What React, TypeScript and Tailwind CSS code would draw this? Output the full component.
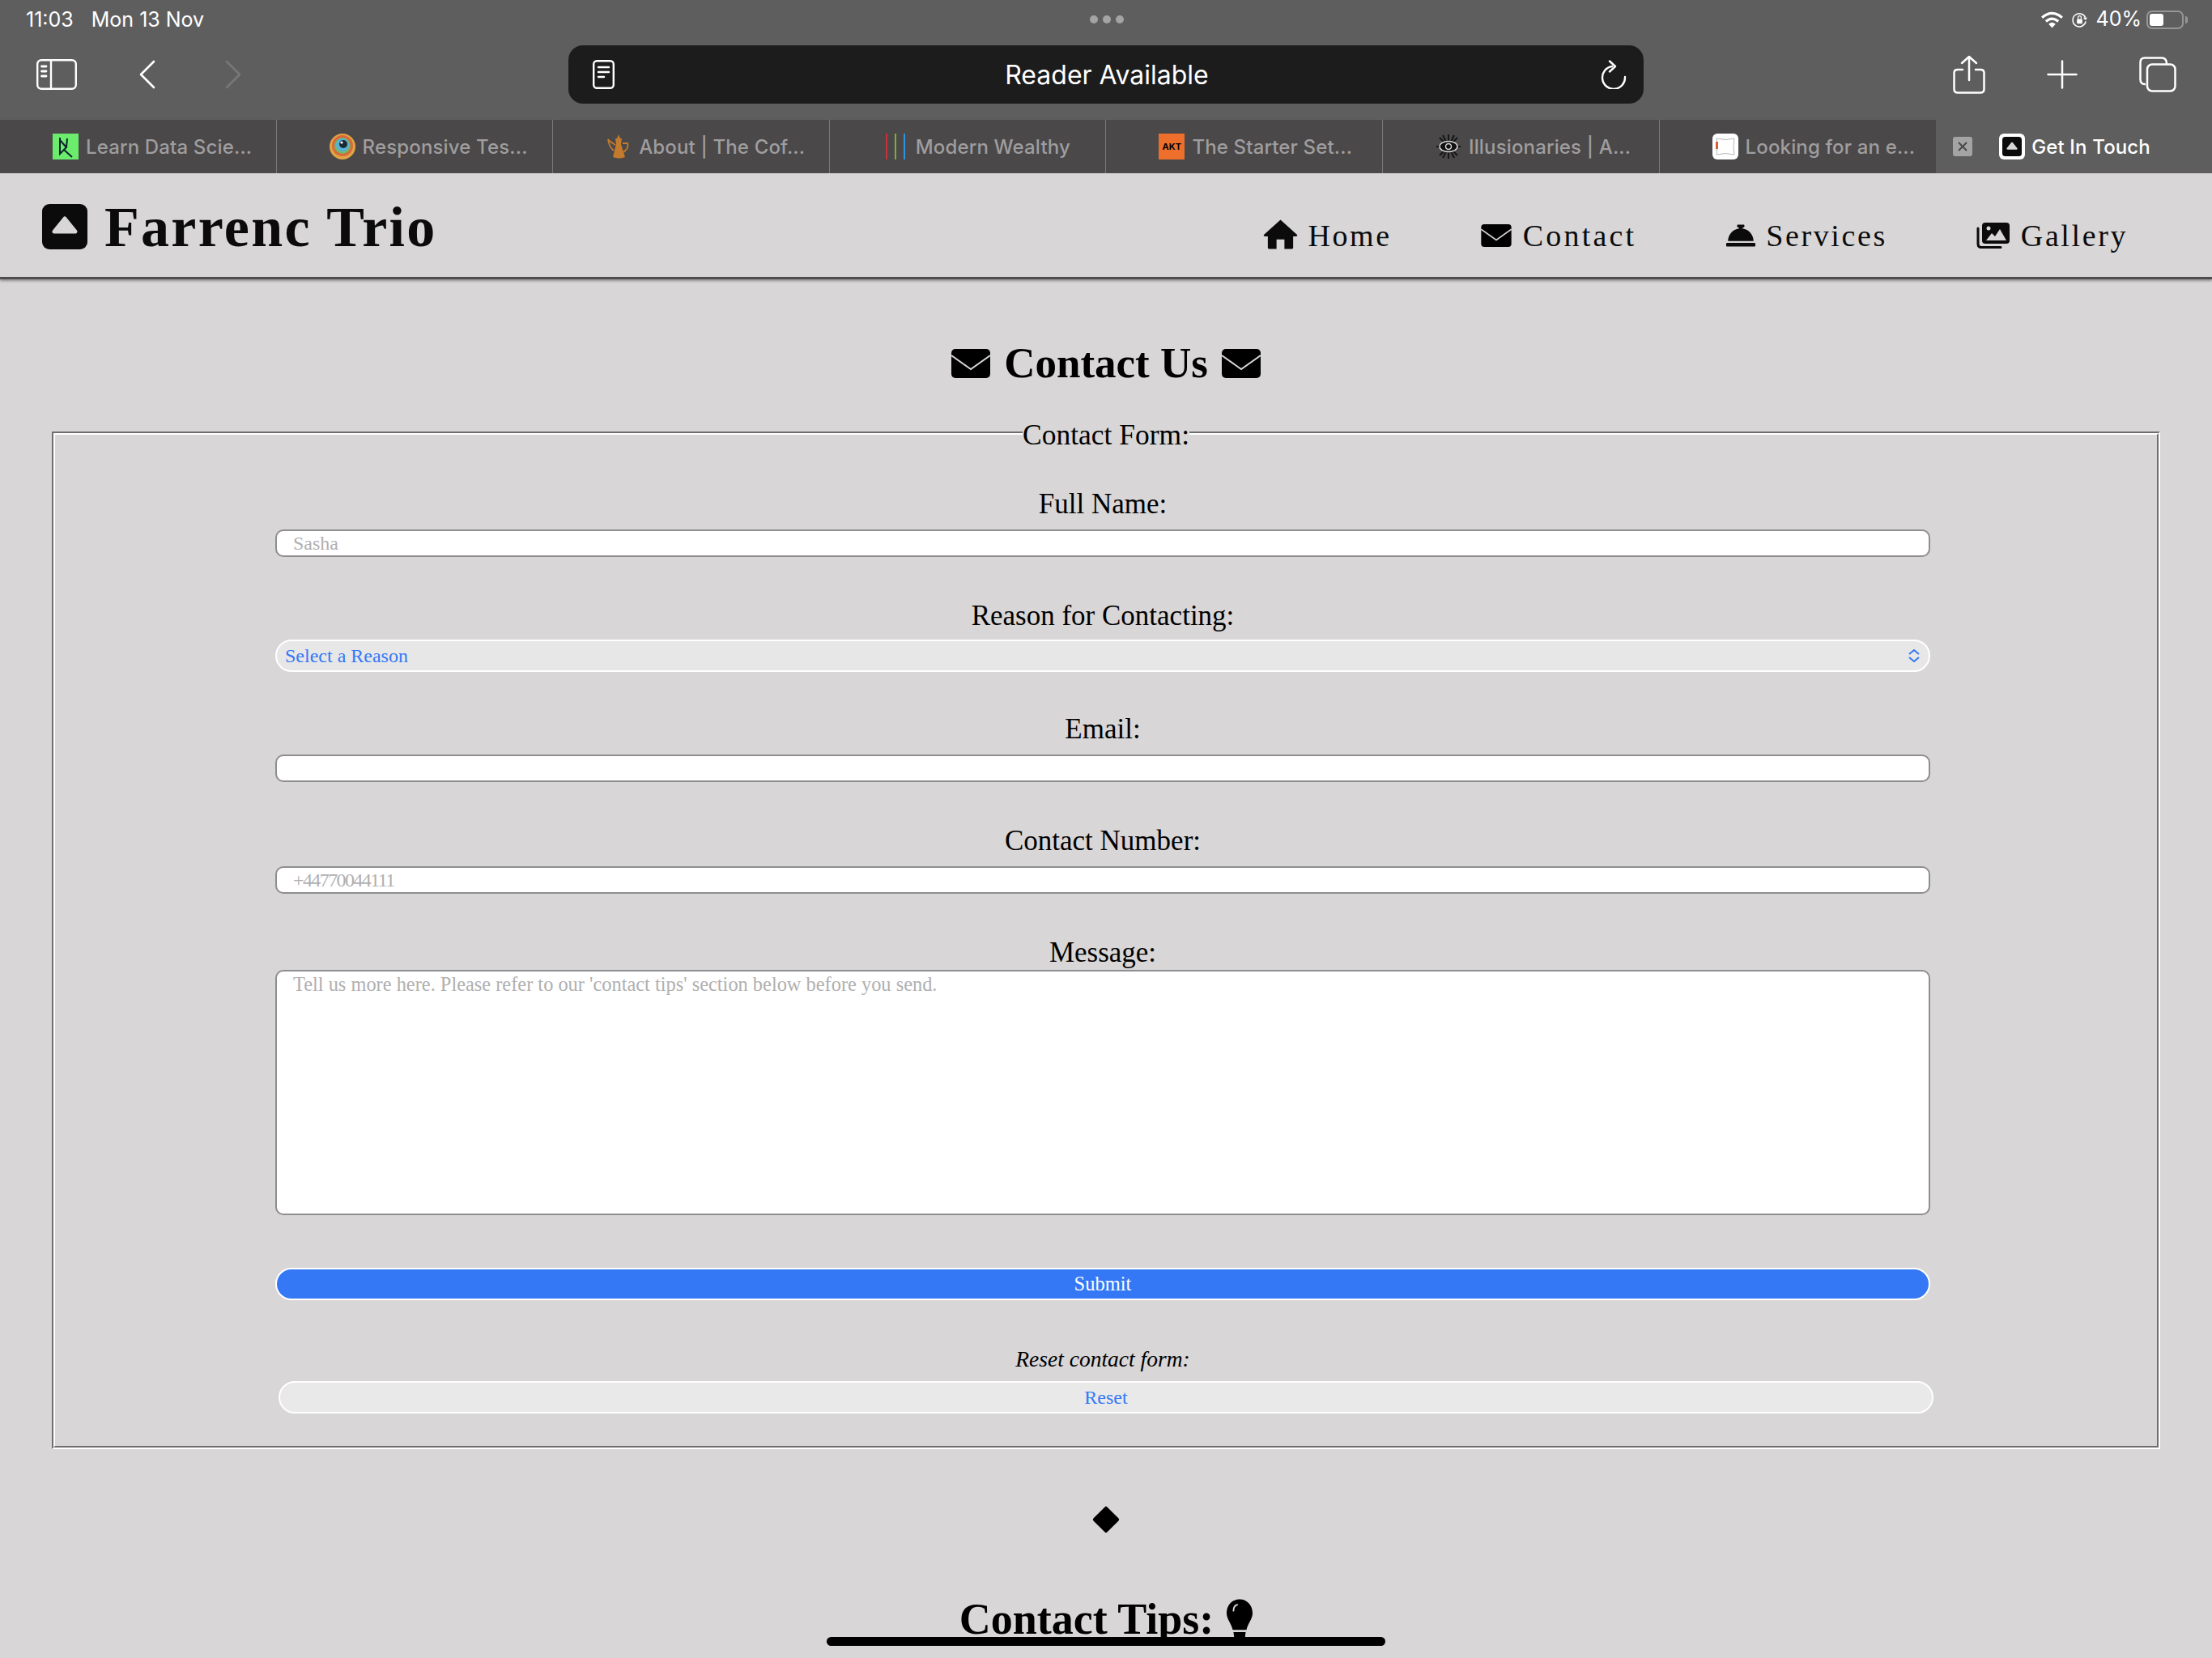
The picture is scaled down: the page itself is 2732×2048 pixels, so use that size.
import { FaConciergeBell } from 'react-icons/fa';

const serif = "font-['Liberation_Serif',serif]";
const ui = "font-['Inter',sans-serif]";

function LogoMark({ className }: { className: string }) {
  return (
    <svg viewBox="0 0 56 56" className={className}>
      <rect width="56" height="56" rx="9" fill="#0b0b0c" />
      <path d="M28 18 L41 34 H15 Z" fill="#d8d6d7" stroke="#d8d6d7" strokeWidth="5" strokeLinejoin="round" />
    </svg>
  );
}

function MailIcon({ className }: { className: string }) {
  return (
    <svg viewBox="0 0 48 36" className={className}>
      <rect width="48" height="36" rx="5" fill="#000" />
      <path d="M0 8 L24 25 L48 8" fill="none" stroke="#d8d6d7" strokeWidth="2" />
    </svg>
  );
}

function HomeIcon({ className }: { className: string }) {
  return (
    <svg viewBox="0 0 44 37" className={className}>
      <path d="M22 0 L43 19 Q44 21 41 21 H38 V35 Q38 37 36 37 H27 V25 H17 V37 H8 Q6 37 6 35 V21 H3 Q0 21 1 19 Z" fill="#0b0b0c" />
    </svg>
  );
}

function GalleryIcon({ className }: { className: string }) {
  return (
    <svg viewBox="0 0 41 32" className={className}>
      <path d="M2 7 V26 Q2 30.5 6 30.5 H30" fill="none" stroke="#0b0b0c" strokeWidth="3" strokeLinecap="round" />
      <rect x="7" y="0" width="34" height="26" rx="4" fill="#0b0b0c" />
      <path d="M12 22 L19 13 L23 17 L29 8 L37 22 Z" fill="#d8d6d7" />
      <circle cx="15" cy="7" r="2.5" fill="#d8d6d7" />
    </svg>
  );
}

function Favicon({ kind }: { kind: string }) {
  if (kind === 'data') {
    return (
      <svg viewBox="0 0 32 32" className="w-8 h-8 shrink-0">
        <rect width="32" height="32" fill="#6cec6c" />
        <path d="M9 5 V25 L17 17 L9 8 M17 17 L18 6 M14 20 L24 29" stroke="#10202a" strokeWidth="2" fill="none" />
      </svg>
    );
  }
  if (kind === 'responsive') {
    return (
      <svg viewBox="0 0 32 32" className="w-8 h-8 shrink-0">
        <circle cx="16" cy="16" r="16" fill="#e2a443" />
        <circle cx="16" cy="15" r="13" fill="#d9683a" />
        <circle cx="16" cy="15" r="10" fill="#74b66a" />
        <circle cx="16" cy="14" r="8" fill="#56b3d8" />
        <circle cx="17" cy="13" r="5" fill="#1d2a33" />
        <circle cx="15" cy="11" r="1.6" fill="#ffffff" />
      </svg>
    );
  }
  if (kind === 'coffee') {
    return (
      <svg viewBox="0 0 32 32" className="w-8 h-8 shrink-0">
        <path d="M16 1 L18 6 H20 L19 13 L24 29 Q16 32 9 29 L13 13 L12 6 H14 Z" fill="#c47a2c" />
        <path d="M12 14 Q5 10 3 7 Q4 16 10 21 M21 12 H27 Q29 18 22 23" stroke="#c47a2c" strokeWidth="1.8" fill="none" />
      </svg>
    );
  }
  if (kind === 'wealth') {
    return (
      <div className="w-8 h-8 shrink-0 flex justify-center gap-[9px]">
        <div className="w-[2px] h-8 bg-[#c8323c]" />
        <div className="w-[2px] h-8 bg-[#7fae36]" />
        <div className="w-[2px] h-8 bg-[#2f93e0]" />
      </div>
    );
  }
  if (kind === 'akt') {
    return (
      <div className={`w-8 h-8 shrink-0 bg-[#ee6f2c] flex items-center justify-center text-[11px] font-bold text-black ${ui}`}>AKT</div>
    );
  }
  if (kind === 'eye') {
    return (
      <svg viewBox="0 0 32 32" className="w-8 h-8 shrink-0">
        <path d="M16 1 V31 M1 16 H31 M5 5 L27 27 M27 5 L5 27 M9 2 L23 30 M23 2 L9 30" stroke="#161616" strokeWidth="2" />
        <ellipse cx="16" cy="16" rx="11" ry="6.5" fill="#111" stroke="#d8d8d8" strokeWidth="1.5" />
        <circle cx="16" cy="16" r="3.5" fill="none" stroke="#d8d8d8" strokeWidth="1.5" />
      </svg>
    );
  }
  return (
    <svg viewBox="0 0 32 32" className="w-8 h-8 shrink-0">
      <rect width="32" height="32" rx="6" fill="#ffffff" />
      <path d="M5 6 Q16 9 27 6 Q25 16 27 26 Q16 23 5 26 Q7 16 5 6 Z" fill="none" stroke="#b8b8b8" strokeWidth="1" />
      <rect x="4" y="10" width="3" height="9" fill="#d9602c" />
    </svg>
  );
}

const tabs = [
  { title: 'Learn Data Scie...', icon: 'data' },
  { title: 'Responsive Tes...', icon: 'responsive' },
  { title: 'About | The Cof...', icon: 'coffee' },
  { title: 'Modern Wealthy', icon: 'wealth' },
  { title: 'The Starter Set...', icon: 'akt' },
  { title: 'Illusionaries | A...', icon: 'eye' },
  { title: 'Looking for an e...', icon: 'pillow' },
];

function StatusBar() {
  return (
    <div className={`flex items-center h-[48px] pl-[32px] pr-[30px] text-white text-[25px] ${ui}`}>
      <div className="flex-1 flex gap-[22px] pt-[1px]">
        <span>11:03</span>
        <span>Mon 13 Nov</span>
      </div>
      <div className="flex gap-[6px]">
        <div className="w-[10px] h-[10px] rounded-full bg-[#a5a4a4]" />
        <div className="w-[10px] h-[10px] rounded-full bg-[#a5a4a4]" />
        <div className="w-[10px] h-[10px] rounded-full bg-[#a5a4a4]" />
      </div>
      <div className="flex-1 flex items-center justify-end">
        <svg viewBox="0 0 30 22" className="w-[29px] h-[21px] mr-[9px]">
          <path d="M2 8 Q15 -3 28 8 M7 13 Q15 6 23 13" stroke="#fff" strokeWidth="3.4" fill="none" />
          <path d="M10.5 16.5 Q15 12.5 19.5 16.5 L15 21.5 Z" fill="#fff" />
        </svg>
        <svg viewBox="0 0 22 22" className="w-[21px] h-[21px] mr-[10px]">
          <path d="M18.5 8 A8.5 8.5 0 1 0 19 13" stroke="#fff" strokeWidth="1.6" fill="none" />
          <path d="M15.5 8 H21 L18.5 11.5 Z" fill="#fff" />
          <rect x="7.5" y="10" width="7" height="6" rx="1" fill="#fff" />
          <path d="M9 10 V8 A2 2 0 0 1 13 8 V10" stroke="#fff" strokeWidth="1.3" fill="none" />
        </svg>
        <span className="mr-[6px]">40%</span>
        <div className="w-[46px] h-[23px] rounded-[7px] border-2 border-[#979696] p-[2px]">
          <div className="w-[17px] h-full rounded-[3px] bg-white" />
        </div>
        <div className="w-[3px] h-[9px] ml-[2px] rounded-r-full bg-[#979696]" />
      </div>
    </div>
  );
}

function Toolbar() {
  return (
    <div className="flex items-center h-[100px] pb-[12px]">
      <div className="w-[702px] flex items-center shrink-0">
        <svg viewBox="0 0 50 38" className="w-[50px] h-[38px] ml-[45px]" fill="none" stroke="#fff" strokeWidth="2.4" strokeLinecap="round">
          <rect x="1.2" y="1.2" width="47.6" height="35.6" rx="5" />
          <path d="M18 1.2 V36.8" />
          <path d="M6.5 9 H12 M6.5 15 H12 M6.5 21 H12" strokeWidth="2.8" />
        </svg>
        <svg viewBox="0 0 20 36" className="w-[20px] h-[36px] ml-[77px]" fill="none" stroke="#fff" strokeWidth="2.6" strokeLinecap="round" strokeLinejoin="round">
          <path d="M18 2 L2 18 L18 34" />
        </svg>
        <svg viewBox="0 0 20 36" className="w-[20px] h-[36px] ml-[86px]" fill="none" stroke="#787777" strokeWidth="2.6" strokeLinecap="round" strokeLinejoin="round">
          <path d="M2 2 L18 18 L2 34" />
        </svg>
      </div>
      <div className="w-[1328px] h-[72px] shrink-0 rounded-[18px] bg-[#1c1c1c] flex items-center pl-[30px] pr-[21px]">
        <svg viewBox="0 0 27 36" className="w-[27px] h-[36px]" fill="none" stroke="#fff" strokeLinecap="round">
          <rect x="1.2" y="1.2" width="24.6" height="33.6" rx="4" strokeWidth="2.4" />
          <path d="M7 9 H20 M7 15 H20 M7 21 H14" strokeWidth="2.4" />
        </svg>
        <span className={`flex-1 text-center text-white text-[32px] pt-[2px] pr-[2px] ${ui}`}>Reader Available</span>
        <svg viewBox="0 0 32 36" className="w-[32px] h-[36px]" fill="none" stroke="#fff" strokeWidth="2.4" strokeLinecap="round" strokeLinejoin="round">
          <path d="M14 8 A14 14 0 1 0 30 21" />
          <path d="M11 1.5 L18 8 L11 14.5" />
        </svg>
      </div>
      <div className="flex items-center">
        <svg viewBox="0 0 40 48" className="w-[40px] h-[48px] ml-[382px]" fill="none" stroke="#fff" strokeWidth="2.5" strokeLinecap="round" strokeLinejoin="round">
          <path d="M20 2 V31 M11 10 L20 2 L29 10" />
          <path d="M12 18 H6 Q1.5 18 1.5 22 V42 Q1.5 46.5 6 46.5 H34 Q38.5 46.5 38.5 42 V22 Q38.5 18 34 18 H28" />
        </svg>
        <svg viewBox="0 0 38 36" className="w-[38px] h-[36px] ml-[76px]" fill="none" stroke="#fff" strokeWidth="2.5" strokeLinecap="round">
          <path d="M19 1.5 V34.5 M1.5 18 H36.5" />
        </svg>
        <svg viewBox="0 0 46 44" className="w-[46px] h-[44px] ml-[76px]" fill="none" stroke="#fff" strokeWidth="2.5" strokeLinejoin="round">
          <path d="M8 34 H7 Q1.5 34 1.5 28 V7 Q1.5 1.5 7 1.5 H28 Q34 1.5 34 9" />
          <rect x="10" y="9.5" width="34.5" height="33" rx="6" />
        </svg>
      </div>
    </div>
  );
}

function TabBar() {
  return (
    <div className={`flex h-[66px] bg-[#4a4849] text-[24px] font-medium tracking-[0.15px] ${ui}`}>
      {tabs.map((t, i) => (
        <div
          key={t.title}
          className={`w-[341.6px] flex items-center pl-[65px] gap-[9px] text-[#9f9d9e] whitespace-nowrap ${i < 6 ? 'border-r border-[#7a797a]' : ''}`}
        >
          <Favicon kind={t.icon} />
          <span className="pt-[2px]">{t.title}</span>
        </div>
      ))}
      <div className="flex-1 bg-[#5f5e5e] flex items-center pl-[21px] text-white whitespace-nowrap">
        <div className="w-[24px] h-[24px] rounded-[3px] bg-[#a5a4a4] flex items-center justify-center">
          <svg viewBox="0 0 12 12" className="w-[12px] h-[12px]" stroke="#4a4849" strokeWidth="2">
            <path d="M1 1 L11 11 M11 1 L1 11" />
          </svg>
        </div>
        <div className="w-[32px] h-[32px] rounded-[6px] bg-white flex items-center justify-center ml-[33px] mr-[8px]">
          <LogoMark className="w-[24px] h-[24px]" />
        </div>
        <span className="pt-[2px]">Get In Touch</span>
      </div>
    </div>
  );
}

function SiteHeader() {
  return (
    <header className={`flex items-center h-[131px] pt-[4px] border-b-[3px] border-[#4f4e4f] shadow-[0_2px_3px_#8a898a] ${serif}`}>
      <LogoMark className="w-[56px] h-[56px] ml-[52px] mr-[21px] shrink-0" />
      <h1 className="text-[70px] font-bold tracking-[2.3px] text-[#0b0b0c] whitespace-nowrap">Farrenc Trio</h1>
      <nav className="ml-auto pr-[104px] mt-[22px] flex items-center text-[38px] tracking-[2.6px] text-[#0b0b0c] whitespace-nowrap">
        <span className="flex items-center gap-[12px]"><HomeIcon className="w-[43px] h-[37px] mt-[-4px]" />Home</span>
        <span className="flex items-center gap-[14px] ml-[110px] tracking-[3.2px]"><MailIcon className="w-[38px] h-[28px]" />Contact</span>
        <span className="flex items-center gap-[13px] ml-[111px]"><FaConciergeBell size={36} />Services</span>
        <span className="flex items-center gap-[14px] ml-[110px]"><GalleryIcon className="w-[41px] h-[32px]" />Gallery</span>
      </nav>
    </header>
  );
}

function FieldLabel({ children, className }: { children: string; className: string }) {
  return <label className={`block h-[44px] leading-[46px] text-center text-[35px] text-black ${className}`}>{children}</label>;
}

function ContactForm() {
  const input =
    'block w-full h-[34px] rounded-[10px] border-2 border-[#8e8d90] bg-white pl-[20px] text-[24px] outline-none placeholder:text-[#b0afb0]';
  return (
    <div className={`relative w-[2604px] h-[1257px] ml-[64px] mt-[59px] border-2 border-t-[#6f6e6f] border-l-[#6f6e6f] border-r-white border-b-white ${serif}`}>
      {/* legend sits on top of the border */}
      <div className="absolute top-[-18px] left-[1197px] bg-[#d8d6d7] text-[35.5px] leading-[40px] text-black whitespace-nowrap">Contact Form:</div>
      <div className="h-full border-2 border-t-white border-l-white border-r-[#6f6e6f] border-b-[#6f6e6f] pl-[272px] pt-[63px]">
        <form className="w-[2044px]">
          <FieldLabel className="">Full Name:</FieldLabel>
          <input className={`${input} mt-[10px]`} placeholder="Sasha" />

          <FieldLabel className="mt-[50px]">Reason for Contacting:</FieldLabel>
          <div className="mt-[8px] h-[40px] rounded-[20px] border-2 border-white bg-[#e7e7e7] flex items-center justify-between pl-[10px] pr-[11px] text-[24px] text-[#3478f6]">
            <span>Select a Reason</span>
            <svg viewBox="0 0 14 16" className="w-[14px] h-[16px]" fill="none" stroke="#3478f6" strokeWidth="2">
              <path d="M1 6 L7 1 L13 6 M1 10 L7 15 L13 10" />
            </svg>
          </div>

          <FieldLabel className="mt-[48px]">Email:</FieldLabel>
          <input className={`${input} mt-[10px]`} />

          <FieldLabel className="mt-[50px]">Contact Number:</FieldLabel>
          <input className={`${input} mt-[10px] tracking-[-1.6px]`} placeholder="+44770044111" />

          <FieldLabel className="mt-[50px]">Message:</FieldLabel>
          <textarea
            className="block w-full h-[303px] rounded-[10px] border-2 border-[#8e8d90] bg-white pl-[20px] pt-[2px] text-[24.4px] leading-[28px] outline-none resize-none placeholder:text-[#b0afb0]"
            placeholder="Tell us more here. Please refer to our 'contact tips' section below before you send."
          />

          <button type="button" className="block w-full h-[40px] mt-[65px] rounded-[20px] border-2 border-white bg-[#3478f6] text-white text-[24.5px]">Submit</button>

          <div className="mt-[52px] h-[40px] leading-[41px] text-center text-[27.5px] italic text-black">Reset contact form:</div>
          <button type="button" className="block w-full h-[40px] mt-[8px] ml-[4px] rounded-[20px] border-2 border-white bg-[#e9e9e9] text-[#3478f6] text-[24px]">Reset</button>
        </form>
      </div>
    </div>
  );
}

export default function App() {
  return (
    <div className="relative w-[2732px] h-[2048px] overflow-hidden bg-[#d8d6d7]">
      <div className="bg-[#5f5e5e]">
        <StatusBar />
        <Toolbar />
      </div>
      <TabBar />
      <SiteHeader />
      <main className={serif}>
        <h2 className="mt-[79px] h-[50px] flex items-center justify-center gap-[17px] text-[53px] font-bold text-black whitespace-nowrap">
          <MailIcon className="w-[48px] h-[36px]" />
          Contact Us
          <MailIcon className="w-[48px] h-[36px]" />
        </h2>
        <ContactForm />
        <div className="w-[24px] h-[24px] rotate-45 rounded-[2px] bg-black mx-auto mt-[75px]" />
        <h2 className="mt-[81px] flex items-center justify-center gap-[16px] text-[54px] leading-[60px] font-bold text-black whitespace-nowrap">
          Contact Tips:
          <svg viewBox="0 0 34 52" className="w-[32px] h-[50px]">
            <path d="M17 0 C7 0 0 8 0 18 C0 26 6 31 8 40 H26 C28 31 34 26 34 18 C34 8 27 0 17 0 Z" fill="#000" />
            <path d="M9 15 C9 11 11 8 14 7" stroke="#d8d6d7" strokeWidth="2" fill="none" strokeLinecap="round" />
            <path d="M9 43 H25 L24 51 H10 Z" fill="#000" />
          </svg>
        </h2>
      </main>
      {/* home indicator floats over the page */}
      <div className="absolute left-[1021px] top-[2022px] w-[690px] h-[11px] rounded-full bg-black" />
    </div>
  );
}
